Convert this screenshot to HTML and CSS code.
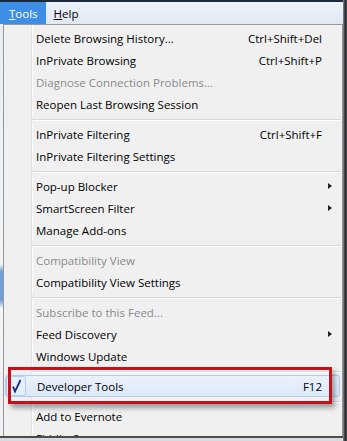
FILE: index.html
```html
<!DOCTYPE html>
<html lang="en">
<head>
  <meta charset="UTF-8">
  <meta name="viewport" content="width=device-width, initial-scale=1.0">
  <title>Tools menu</title>
  <link rel="stylesheet" href="styles.css">
</head>
<body>
  <div class="screen">
    <div class="main">
      <div class="menubar">
        <span class="top-item open"><u>T</u>ools</span>
        <span class="top-item"><u>H</u>elp</span>
      </div>
      <div class="lower">
        <div class="behind"></div>
        <div class="popup">
          <div class="item"><span class="label">Delete Browsing History...</span><span class="key">Ctrl+Shift+Del</span></div>
          <div class="item"><span class="label">InPrivate Browsing</span><span class="key">Ctrl+Shift+P</span></div>
          <div class="item disabled"><span class="label">Diagnose Connection Problems...</span></div>
          <div class="item"><span class="label">Reopen Last Browsing Session</span></div>
          <div class="sep"></div>
          <div class="item"><span class="label">InPrivate Filtering</span><span class="key">Ctrl+Shift+F</span></div>
          <div class="item"><span class="label">InPrivate Filtering Settings</span></div>
          <div class="sep"></div>
          <div class="item"><span class="label">Pop-up Blocker</span><span class="arrow"></span></div>
          <div class="item"><span class="label">SmartScreen Filter</span><span class="arrow"></span></div>
          <div class="item"><span class="label">Manage Add-ons</span></div>
          <div class="sep"></div>
          <div class="item disabled"><span class="label">Compatibility View</span></div>
          <div class="item"><span class="label">Compatibility View Settings</span></div>
          <div class="sep"></div>
          <div class="item disabled"><span class="label">Subscribe to this Feed...</span></div>
          <div class="item"><span class="label">Feed Discovery</span><span class="arrow"></span></div>
          <div class="item"><span class="label">Windows Update</span></div>
          <div class="sep"></div>
          <div class="item hot">
            <span class="check">
              <svg width="18" height="18" viewBox="0 0 18 18"><path d="M6 9.5 L8 14.5 L13.5 3" fill="none" stroke="#1d2a8c" stroke-width="1.8" stroke-linejoin="miter"/></svg>
            </span>
            <span class="label">Developer Tools</span><span class="key">F12</span>
          </div>
          <div class="sep"></div>
          <div class="item"><span class="label">Add to Evernote</span></div>
          <div class="item"><span class="label">Fiddler2</span></div>
        </div>
      </div>
      <div class="bottom-frame"></div>
    </div>
    <div class="frame-right"></div>
    <div class="callout"></div>
  </div>
</body>
</html>
```

FILE: styles.css
```css
body {
  margin: 0;
  font-family: "Open Sans", "Noto Sans", sans-serif;
  font-size: 11.5px;
  background: #fff;
}
.screen {
  position: relative;
  display: flex;
  width: 347px;
  height: 441px;
  overflow: hidden;
}
.main {
  display: flex;
  flex-direction: column;
  width: 343px;
}
.menubar {
  display: flex;
  height: 22px;
  border-top: 2px solid #1c2a3b;
  background: linear-gradient(#eef3fb, #dfe8f5);
}
.top-item {
  display: flex;
  align-items: center;
  padding: 0 8px;
  color: #000;
}
.top-item.open {
  background: #3d8fe6;
  color: #fff;
  padding: 0 8px 0 9px;
}
.lower {
  display: flex;
  height: 412px;
}
.behind {
  width: 3px;
  background: linear-gradient(#e9edf2 0, #f3f5f7 240px, #6f9fd8 248px, #6f9fd8 276px, #f3f5f7 284px, #eef0f3 100%);
}
.popup {
  width: 338px;
  border: 1px solid #979797;
  border-bottom: none;
  padding-top: 2px;
  overflow: hidden;
  background: linear-gradient(to right, #f0f0f0 27px, #e2e3e3 27px, #e2e3e3 28px, #fff 28px, #fff 29px, #f0f0f0 29px);
}
.item {
  display: flex;
  align-items: center;
  box-sizing: border-box;
  height: 22px;
  padding: 0 20px 0 32px;
  color: #000;
  white-space: nowrap;
}
.item.disabled {
  color: #8a8a8a;
}
.key {
  margin-left: auto;
}
.arrow {
  margin-left: auto;
  margin-right: -10px;
  width: 0;
  height: 0;
  border-top: 3.5px solid transparent;
  border-bottom: 3.5px solid transparent;
  border-left: 4px solid #222;
}
.item.hot {
  margin: 0 2px 0 1px;
  padding: 0 17px 0 0;
  border: 1px solid #aecdf0;
  border-radius: 3px;
  background: linear-gradient(#eaf3fc, #dce9f7);
}
.check {
  display: flex;
  align-items: center;
  justify-content: center;
  box-sizing: border-box;
  width: 20px;
  height: 20px;
  margin-right: 11px;
  border: 1px solid #b3cfee;
  border-radius: 3px;
  background: #e6f0fb;
}
.sep {
  height: 8px;
  margin: 0 1px 0 28px;
  background: linear-gradient(#f0f0f0 4px, #d9d9d9 4px, #d9d9d9 5px, #fff 5px, #fff 6px, #f0f0f0 6px);
}
.bottom-frame {
  height: 3px;
  border-top: 2px solid #4b4d50;
  background: #d6d9dd;
}
.frame-right {
  width: 4px;
  background: linear-gradient(to right, #8d9096, #3c3f44 40%, #2a2c30 70%, #55585d);
}
/* red annotation box drawn over the menu */
.callout {
  position: absolute;
  left: 8px;
  top: 367px;
  width: 318px;
  height: 31px;
  border: 3px solid #c3121b;
  box-shadow: 3px 4px 5px rgba(0, 0, 0, 0.35);
}
```
